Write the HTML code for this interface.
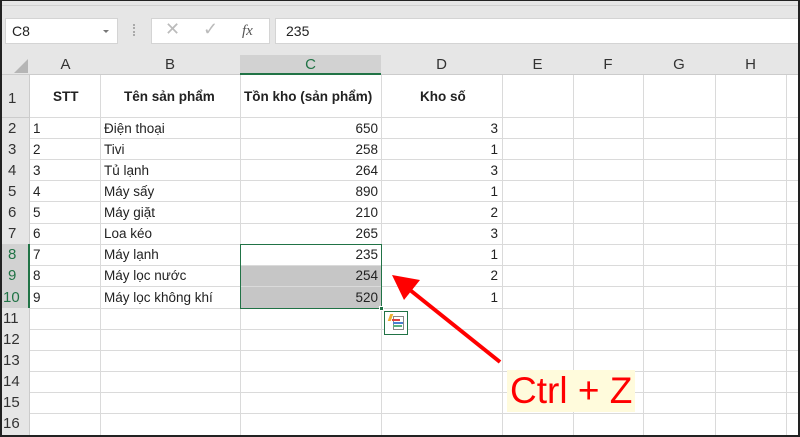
<!DOCTYPE html>
<html><head><meta charset="utf-8"><style>
*{margin:0;padding:0;box-sizing:border-box}
body{width:800px;height:437px;overflow:hidden;background:#fff;font-family:"Liberation Sans",Arial,sans-serif;position:relative}
.a{position:absolute}
.t{position:absolute;font-size:13.5px;color:#222;white-space:nowrap;line-height:21px}
.hl{position:absolute;height:1px;background:#dadada;left:30px;width:770px}
.vl{position:absolute;width:1px;background:#dadada;top:75px;height:362px}
.rh{position:absolute;left:2px;width:28px;font-size:15px;color:#333;line-height:21px;padding-left:6px}
.ch{position:absolute;top:55px;height:20px;font-size:15px;color:#333;text-align:center;line-height:20px}
</style></head><body>
<div class="a" style="left:0;top:0;width:800px;height:52px;background:#e6e6e6"></div>
<div class="a" style="left:0;top:5px;width:800px;height:1px;background:#d0d0d0"></div>
<div class="a" style="left:5px;top:18px;width:113px;height:26px;background:#fff;border:1px solid #d4d4d4"></div>
<div class="t" style="left:12px;top:21px;font-size:14px">C8</div>
<div class="a" style="left:103px;top:30px;border-left:3px solid transparent;border-right:3px solid transparent;border-top:3px solid #777"></div>
<div class="a" style="left:133px;top:24px;width:2px;height:12px;border-left:2px dotted #aaa"></div>
<div class="a" style="left:151px;top:18px;width:119px;height:26px;background:#fff;border:1px solid #d4d4d4"></div>
<div class="t" style="left:165px;top:19px;font-size:18px;color:#bbb">✕</div>
<div class="t" style="left:203px;top:19px;font-size:18px;color:#bbb">✓</div>
<div class="t" style="left:242px;top:21px;font-size:15px;color:#555;font-family:'Liberation Serif',serif;font-style:italic">fx</div>
<div class="a" style="left:275px;top:18px;width:525px;height:26px;background:#fff;border:1px solid #d4d4d4"></div>
<div class="t" style="left:286px;top:21px;font-size:14px">235</div>
<!-- col header -->
<div class="a" style="left:0;top:52px;width:800px;height:23px;background:#e6e6e6;border-bottom:1px solid #ccc"></div>
<div class="a" style="left:240px;top:55px;width:141px;height:20px;background:#d2d2d2;border-bottom:2px solid #217346"></div>
<div class="a" style="left:14px;top:59px;width:0;height:0;border-left:14px solid transparent;border-bottom:14px solid #b5b5b5"></div>
<div class="ch" style="left:31px;width:69px">A</div>
<div class="ch" style="left:100px;width:140px">B</div>
<div class="ch" style="left:240px;width:141px;color:#217346">C</div>
<div class="ch" style="left:381px;width:121px">D</div>
<div class="ch" style="left:502px;width:71px">E</div>
<div class="ch" style="left:573px;width:70px">F</div>
<div class="ch" style="left:643px;width:72px">G</div>
<div class="ch" style="left:715px;width:71px">H</div>
<!-- row header -->
<div class="a" style="left:0;top:75px;width:30px;height:362px;background:#e6e6e6;border-right:1px solid #ccc"></div>
<div class="a" style="left:0;top:244px;width:30px;height:64px;background:#d2d2d2;border-right:2px solid #217346"></div>
<!-- grid -->
<div class="vl" style="left:100px"></div><div class="vl" style="left:240px"></div><div class="vl" style="left:381px"></div><div class="vl" style="left:502px"></div><div class="vl" style="left:573px"></div><div class="vl" style="left:643px"></div><div class="vl" style="left:715px"></div><div class="vl" style="left:786px"></div>
<div class="a" style="left:240px;top:265px;width:141px;height:43px;background:#c6c6c6"></div>
<div class="hl" style="top:117px"></div><div class="hl" style="top:138px"></div><div class="hl" style="top:159px"></div><div class="hl" style="top:180px"></div><div class="hl" style="top:201px"></div><div class="hl" style="top:223px"></div><div class="hl" style="top:244px"></div><div class="hl" style="top:265px"></div><div class="hl" style="top:286px"></div><div class="hl" style="top:308px"></div><div class="hl" style="top:329px"></div><div class="hl" style="top:350px"></div><div class="hl" style="top:371px"></div><div class="hl" style="top:392px"></div><div class="hl" style="top:413px"></div>
<div class="a" style="left:0;top:117px;width:30px;height:1px;background:#ccc"></div>
<div class="rh" style="top:88px">1</div>
<div class="rh" style="top:118px">2</div><div class="rh" style="top:139px">3</div><div class="rh" style="top:160px">4</div><div class="rh" style="top:181px">5</div><div class="rh" style="top:202px">6</div><div class="rh" style="top:223px">7</div><div class="rh" style="top:244px;color:#217346">8</div><div class="rh" style="top:265px;color:#217346">9</div><div class="rh" style="top:287px;color:#217346;padding-left:1px">10</div><div class="rh" style="top:308px;padding-left:1px">11</div><div class="rh" style="top:329px;padding-left:1px">12</div><div class="rh" style="top:350px;padding-left:1px">13</div><div class="rh" style="top:371px;padding-left:1px">14</div><div class="rh" style="top:392px;padding-left:1px">15</div><div class="rh" style="top:413px;padding-left:1px">16</div>
<!-- headers row1 -->
<div class="t" style="left:53px;top:86px;font-weight:bold">STT</div>
<div class="t" style="left:124px;top:86px;font-weight:bold">Tên sản phẩm</div>
<div class="t" style="left:244px;top:86px;font-weight:bold">Tồn kho (sản phẩm)</div>
<div class="t" style="left:420px;top:86px;font-weight:bold">Kho số</div>
<!-- data -->
<div id="d"></div>
<div class="t" style="left:33px;top:118px">1</div><div class="t" style="left:104px;top:118px">Điện thoại</div><div class="t" style="left:300px;top:118px;width:78px;text-align:right">650</div><div class="t" style="left:420px;top:118px;width:78px;text-align:right">3</div>
<div class="t" style="left:33px;top:139px">2</div><div class="t" style="left:104px;top:139px">Tivi</div><div class="t" style="left:300px;top:139px;width:78px;text-align:right">258</div><div class="t" style="left:420px;top:139px;width:78px;text-align:right">1</div>
<div class="t" style="left:33px;top:160px">3</div><div class="t" style="left:104px;top:160px">Tủ lạnh</div><div class="t" style="left:300px;top:160px;width:78px;text-align:right">264</div><div class="t" style="left:420px;top:160px;width:78px;text-align:right">3</div>
<div class="t" style="left:33px;top:181px">4</div><div class="t" style="left:104px;top:181px">Máy sấy</div><div class="t" style="left:300px;top:181px;width:78px;text-align:right">890</div><div class="t" style="left:420px;top:181px;width:78px;text-align:right">1</div>
<div class="t" style="left:33px;top:202px">5</div><div class="t" style="left:104px;top:202px">Máy giặt</div><div class="t" style="left:300px;top:202px;width:78px;text-align:right">210</div><div class="t" style="left:420px;top:202px;width:78px;text-align:right">2</div>
<div class="t" style="left:33px;top:223px">6</div><div class="t" style="left:104px;top:223px">Loa kéo</div><div class="t" style="left:300px;top:223px;width:78px;text-align:right">265</div><div class="t" style="left:420px;top:223px;width:78px;text-align:right">3</div>
<div class="t" style="left:33px;top:244px">7</div><div class="t" style="left:104px;top:244px">Máy lạnh</div><div class="t" style="left:300px;top:244px;width:78px;text-align:right">235</div><div class="t" style="left:420px;top:244px;width:78px;text-align:right">1</div>
<div class="t" style="left:33px;top:265px">8</div><div class="t" style="left:104px;top:265px">Máy lọc nước</div><div class="t" style="left:300px;top:265px;width:78px;text-align:right">254</div><div class="t" style="left:420px;top:265px;width:78px;text-align:right">2</div>
<div class="t" style="left:33px;top:287px">9</div><div class="t" style="left:104px;top:287px">Máy lọc không khí</div><div class="t" style="left:300px;top:287px;width:78px;text-align:right">520</div><div class="t" style="left:420px;top:287px;width:78px;text-align:right">1</div>
<!-- selection -->
<div class="a" style="left:240px;top:244px;width:142px;height:65px;border:1.5px solid #217346"></div>
<div class="a" style="left:379px;top:306px;width:5px;height:5px;background:#217346;border:1px solid #fff"></div>
<!-- quick analysis icon -->
<div class="a" style="left:384px;top:311px;width:24px;height:24px;border:1px solid #217346;background:#fff"></div>
<div class="a" style="left:393px;top:316px;width:11px;height:14px;border:1px solid #888"></div>
<div class="a" style="left:392px;top:319px;width:8px;height:2px;background:#e04040"></div>
<div class="a" style="left:393px;top:322px;width:10px;height:2px;background:#4a7fd0"></div>
<div class="a" style="left:393px;top:325px;width:9px;height:2px;background:#5ab080"></div>
<div class="a" style="left:389px;top:314px;width:3px;height:7px;background:#f0b030;transform:skewX(-20deg)"></div>
<!-- arrow -->
<svg class="a" style="left:0;top:0" width="800" height="437"><line x1="500" y1="362" x2="410" y2="290" stroke="#f00" stroke-width="4"/><polygon points="392,275 420,280 404,300" fill="#f00"/></svg>
<div class="a" style="left:507px;top:370px;width:128px;height:42px;background:#fffbdc"></div>
<div class="t" style="left:510px;top:370px;font-size:37px;line-height:42px;color:#f00">Ctrl + Z</div>
<!-- frame -->
<div class="a" style="left:0;top:0;width:800px;height:437px;border:2px solid #222;border-top-width:1px"></div>
</body></html>
